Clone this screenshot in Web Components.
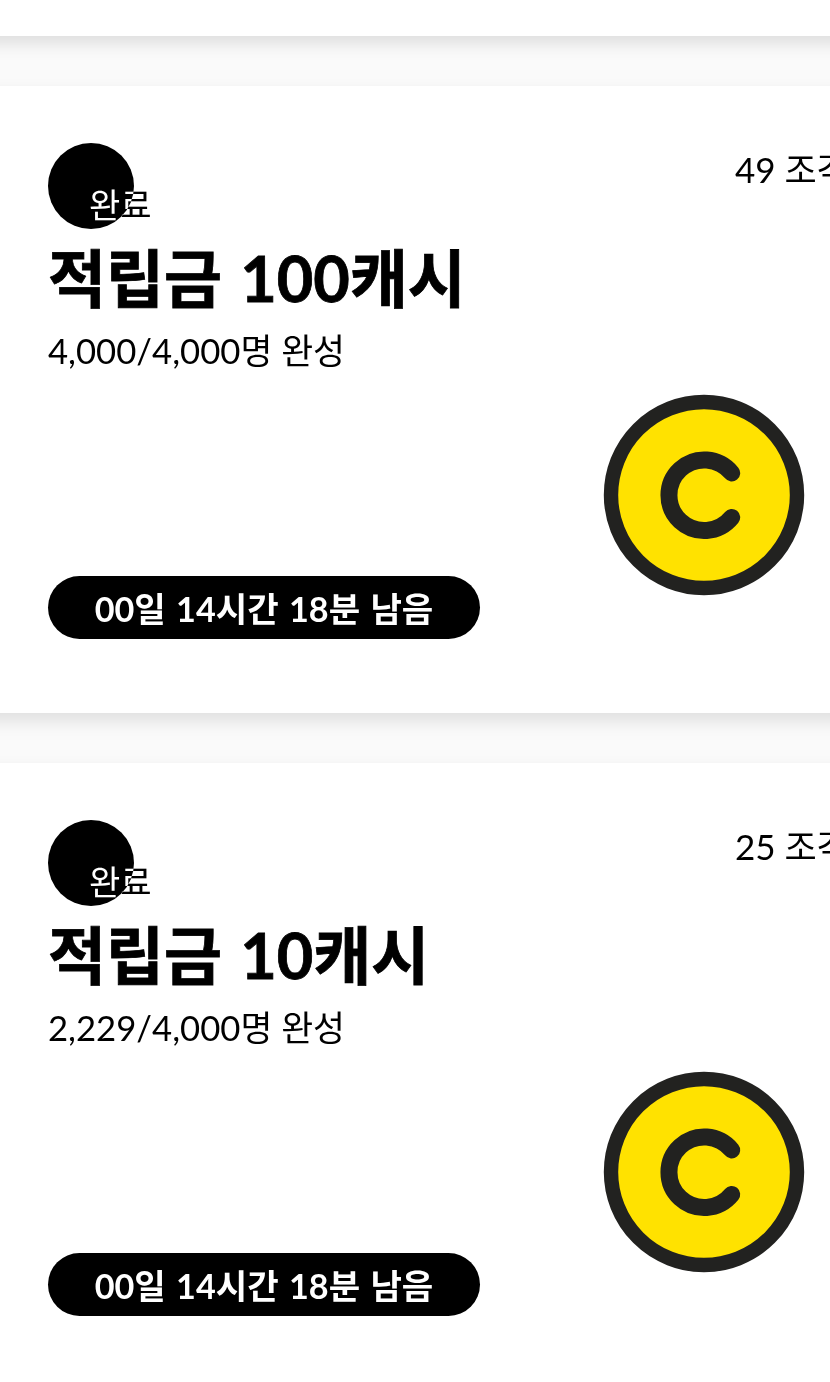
<!DOCTYPE html>
<html lang="ko">
<head>
<meta charset="utf-8">
<title>적립금</title>
<style>
    html, body {
        margin: 0;
        background: #fafafa;
        overflow: hidden;
    }

    body {
        font-family: Lato, "Noto Sans CJK KR", sans-serif;
        color: #000;
    }
</style>
</head>
<body>
<top-bar></top-bar>
<reward-card pieces="49" amount="100" done="4,000"></reward-card>
<reward-card pieces="25" amount="10" done="2,229"></reward-card>

<template id="top-bar-template">
    <style>
        :host {
            display: block;
            position: relative;
            height: 36px;
        }

        #shadow {
            position: absolute;
            inset: 0 -40px;
            background: #fff;
            box-shadow: 0 8px 16px rgba(0, 0, 0, 0.11);
        }
    </style>
    <div id="shadow"></div>
</template>

<template id="coin-template">
    <style>
        :host {
            display: block;
            width: 202px;
            height: 202px;
        }

        svg {
            display: block;
        }
    </style>
    <svg width="202" height="202" viewBox="0 0 202 202">
        <circle cx="101" cy="101" r="93" fill="#ffe200" stroke="#222220" stroke-width="14.4"/>
        <path d="M128.7 79A35.3 35.3 0 1 0 128.7 123.4" fill="none" stroke="#222220" stroke-width="17" stroke-linecap="round"/>
    </svg>
</template>

<template id="reward-card-template">
    <style>
        :host {
            display: block;
            position: relative;
            margin-top: 50px;
            height: 627px;
        }

        #shadow {
            position: absolute;
            inset: 0 -40px;
            box-shadow: 0 8px 16px rgba(0, 0, 0, 0.11);
        }

        #card {
            position: relative;
            display: flex;
            justify-content: space-between;
            box-sizing: border-box;
            height: 100%;
            padding: 57px 25px 74px 48px;
            background: #fff;
            isolation: isolate;
            overflow: hidden;
        }

        #left {
            display: flex;
            flex-direction: column;
            align-items: flex-start;
        }

        #badge {
            position: relative;
            width: 86px;
            height: 86px;
            border-radius: 50%;
            background: #000;
        }

        #badge span {
            position: absolute;
            left: 41px;
            top: 42px;
            font-size: 34px;
            line-height: 40px;
            white-space: nowrap;
            color: #fff;
            mix-blend-mode: difference;
        }

        h2 {
            margin: 10px 0 0;
            font-size: 63px;
            line-height: 78px;
            font-weight: 700;
            word-spacing: 3px;
            white-space: nowrap;
            -webkit-text-stroke: 0.8px #000;
        }

        #progress {
            margin-top: 11px;
            font-size: 34.7px;
            line-height: 46px;
            white-space: nowrap;
        }

        #timer {
            margin-top: auto;
            width: 432px;
            height: 63px;
            border-radius: 32px;
            background: #000;
            color: #fff;
            font-size: 34.2px;
            font-weight: 700;
            line-height: 65px;
            word-spacing: 2px;
            text-align: center;
            white-space: nowrap;
        }

        #right {
            display: flex;
            flex-direction: column;
            width: 202px;
        }

        #pieces {
            margin: 4px 0 0 132px;
            font-size: 35px;
            line-height: 44px;
            white-space: nowrap;
        }

        coin-icon {
            margin-top: 203px;
        }
    </style>
    <div id="shadow"></div>
    <div id="card">
        <div id="left">
            <div id="badge"><span>완료</span></div>
            <h2></h2>
            <div id="progress"></div>
            <div id="timer">00일 14시간 18분 남음</div>
        </div>
        <div id="right">
            <div id="pieces"></div>
            <coin-icon></coin-icon>
        </div>
    </div>
</template>

<script>
    class TopBar extends HTMLElement {
        connectedCallback() {
            this.attachShadow({ mode: "open" });
            this.shadowRoot.appendChild(document.querySelector("#top-bar-template").content.cloneNode(true));
        }
    }

    class CoinIcon extends HTMLElement {
        connectedCallback() {
            this.attachShadow({ mode: "open" });
            this.shadowRoot.appendChild(document.querySelector("#coin-template").content.cloneNode(true));
        }
    }

    class RewardCard extends HTMLElement {
        connectedCallback() {
            this.attachShadow({ mode: "open" });
            this.shadowRoot.appendChild(document.querySelector("#reward-card-template").content.cloneNode(true));

            this.shadowRoot.querySelector("h2").textContent = `적립금 ${this.getAttribute("amount")}캐시`;
            this.shadowRoot.querySelector("#progress").textContent = `${this.getAttribute("done")}/4,000명 완성`;
            this.shadowRoot.querySelector("#pieces").textContent = `${this.getAttribute("pieces")} 조각`;
        }
    }

    customElements.define("top-bar", TopBar);
    customElements.define("coin-icon", CoinIcon);
    customElements.define("reward-card", RewardCard);
</script>
</body>
</html>
